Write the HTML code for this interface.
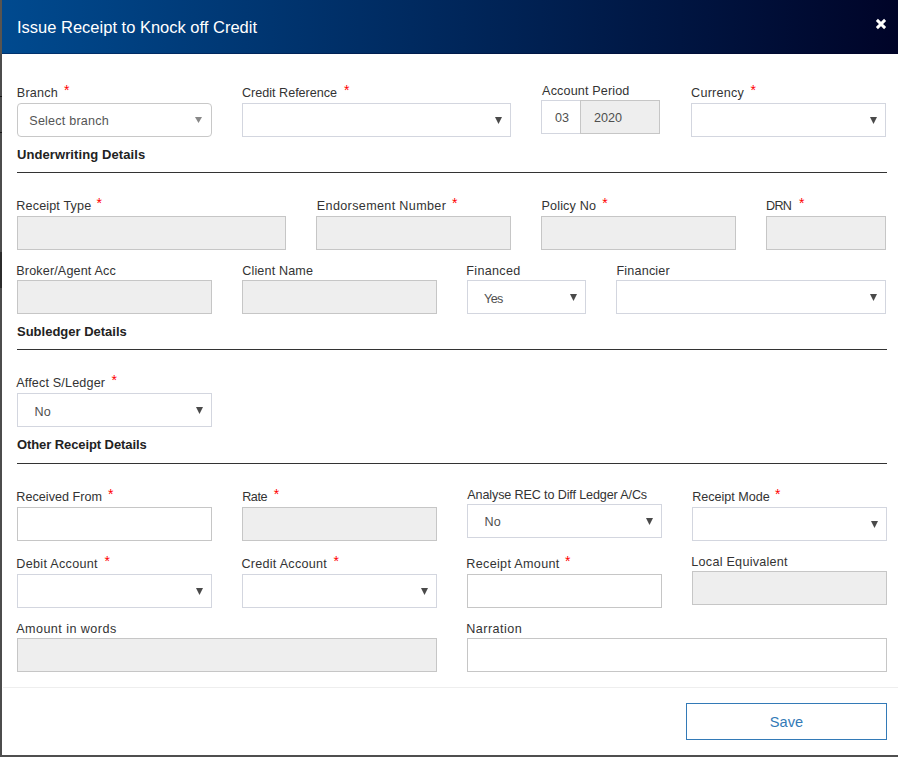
<!DOCTYPE html>
<html><head><meta charset="utf-8">
<style>
*{margin:0;padding:0;box-sizing:border-box}
html,body{width:898px;height:757px;overflow:hidden;background:#fff}
body{font-family:"Liberation Sans",sans-serif;position:relative;color:#333}
.lb{position:absolute;left:0;bottom:0;width:2px;top:0;background:#4c4c4c}
.bb{position:absolute;left:0;right:0;bottom:0;height:2px;background:#4f4f4f}
.hdr{position:absolute;left:2px;top:0;right:0;height:54px;background:linear-gradient(to right,#004a8f 0%,#000428 100%);border-bottom:1px solid rgba(0,0,40,.3)}
.title{position:absolute;left:15px;top:17px;color:#fff;font-size:16.5px;line-height:20px;white-space:nowrap}
.x{position:absolute;left:874px;top:19px;width:10px;height:10px;overflow:visible}
.l{position:absolute;font-size:12.6px;line-height:15px;white-space:nowrap;color:#333}
.ast{position:absolute;color:#f00;font-size:14px;line-height:15px}
.h{position:absolute;left:17px;font-size:13px;font-weight:bold;line-height:15px;color:#222;white-space:nowrap}
.ln{position:absolute;left:17px;width:870px;height:1px;background:#333}
.b{position:absolute;height:34px;border:1px solid #d3d6df;background:#fff}
.g{background:#eee;border-color:#c6c6c6}
.w{border-color:#c6c6c6}
.ar{position:absolute;width:7px;height:7px;background:#4a4a4a;clip-path:polygon(0 0,100% 0,50% 100%)}
.t{position:absolute;font-size:12.6px;line-height:15px;color:#4f4f4f;white-space:nowrap}
</style></head><body>
<div class="hdr"><div class="title">Issue Receipt to Knock off Credit</div>
<svg class="x" viewBox="0 0 10 10"><path d="M0.9 0.9 L9.1 9.1 M9.1 0.9 L0.9 9.1" stroke="#fff" stroke-width="2.9"/></svg>
</div>
<div class="lb"></div><div class="bb"></div>
<div style="position:absolute;left:0;top:0;width:2px;height:54px;background:#58544f"></div>
<div style="position:absolute;left:0;top:96px;width:2px;height:1px;background:#151515"></div>
<div style="position:absolute;left:0;top:132px;width:2px;height:1px;background:#151515"></div>
<div style="position:absolute;left:0;top:252px;width:2px;height:36px;background:#2b2b2b"></div>

<!-- row 1 -->
<div class="b" style="left:17px;top:103px;width:195px;border-radius:4px;border-color:#c8c8c8"></div>
<div class="t" style="left:29.3px;top:114px;color:#555;letter-spacing:0.2px">Select branch</div>
<div class="ar" style="left:195px;top:117px;background:#888;height:6px"></div>

<div class="b" style="left:242px;top:103px;width:269px"></div>
<div class="ar" style="left:495px;top:117px"></div>

<div class="b" style="left:541px;top:100px;width:40px"></div>
<div class="b g" style="left:580px;top:100px;width:80px"></div>
<div class="t" style="left:555px;top:111px">03</div>
<div class="t" style="left:594px;top:111px">2020</div>

<div class="b" style="left:691px;top:103px;width:195px"></div>
<div class="ar" style="left:870px;top:117px"></div>

<div class="h" style="top:147px;letter-spacing:0.09px">Underwriting Details</div>
<div class="ln" style="top:172px"></div>

<!-- row 2 -->
<div class="b g" style="left:17px;top:216px;width:269px"></div>
<div class="b g" style="left:316px;top:216px;width:195px"></div>
<div class="b g" style="left:541px;top:216px;width:195px"></div>
<div class="b g" style="left:766px;top:216px;width:120px"></div>

<!-- row 3 -->
<div class="b g" style="left:17px;top:280px;width:195px"></div>
<div class="b g" style="left:242px;top:280px;width:195px"></div>
<div class="b" style="left:467px;top:280px;width:119px"></div>
<div class="t" style="left:484px;top:292px;letter-spacing:-0.6px">Yes</div>
<div class="ar" style="left:570px;top:294px"></div>
<div class="b" style="left:616px;top:280px;width:270px"></div>
<div class="ar" style="left:870px;top:294px"></div>

<div class="h" style="top:324px">Subledger Details</div>
<div class="ln" style="top:349px"></div>

<!-- row 4 -->
<div class="b" style="left:17px;top:393px;width:195px"></div>
<div class="t" style="left:34.6px;top:405px">No</div>
<div class="ar" style="left:196px;top:407px"></div>

<div class="h" style="top:437px;letter-spacing:-0.09px">Other Receipt Details</div>
<div class="ln" style="top:463px"></div>

<!-- row 5 -->
<div class="b w" style="left:17px;top:507px;width:195px"></div>
<div class="b g" style="left:242px;top:507px;width:195px"></div>
<div class="b" style="left:467px;top:504px;width:195px"></div>
<div class="t" style="left:484.6px;top:515px">No</div>
<div class="ar" style="left:646px;top:518px"></div>
<div class="b" style="left:692px;top:507px;width:195px"></div>
<div class="ar" style="left:871px;top:521px"></div>

<!-- row 6 -->
<div class="b" style="left:17px;top:574px;width:195px"></div>
<div class="ar" style="left:196px;top:588px"></div>
<div class="b" style="left:242px;top:574px;width:195px"></div>
<div class="ar" style="left:421px;top:588px"></div>
<div class="b w" style="left:467px;top:574px;width:195px"></div>
<div class="b g" style="left:692px;top:571px;width:195px"></div>

<!-- row 7 -->
<div class="b g" style="left:17px;top:638px;width:420px"></div>
<div class="b w" style="left:467px;top:638px;width:420px"></div>

<div style="position:absolute;left:3px;right:0;top:687px;height:1px;background:#eee"></div>
<div style="position:absolute;left:686px;top:703px;width:201px;height:37px;border:1.5px solid #337ab7;color:#337ab7;font-size:14.6px;line-height:36px;text-align:center">Save</div>
<div class="l" id="L0" style="left:16.80px;top:86px;letter-spacing:0.220px">Branch</div>
<div class="ast" style="left:64.00px;top:83px">*</div>
<div class="l" id="L1" style="left:242.00px;top:86px;letter-spacing:-0.007px">Credit Reference</div>
<div class="ast" style="left:344.00px;top:83px">*</div>
<div class="l" id="L2" style="left:542.10px;top:84px;letter-spacing:0.138px">Account Period</div>
<div class="l" id="L3" style="left:691.10px;top:86px;letter-spacing:0.243px">Currency</div>
<div class="ast" style="left:750.40px;top:83px">*</div>
<div class="l" id="L4" style="left:16.30px;top:199px;letter-spacing:0.145px">Receipt Type</div>
<div class="ast" style="left:96.60px;top:196px">*</div>
<div class="l" id="L5" style="left:316.80px;top:199px;letter-spacing:0.347px">Endorsement Number</div>
<div class="ast" style="left:452.00px;top:196px">*</div>
<div class="l" id="L6" style="left:541.50px;top:199px;letter-spacing:0.150px">Policy No</div>
<div class="ast" style="left:602.30px;top:196px">*</div>
<div class="l" id="L7" style="left:766.00px;top:199px;letter-spacing:-0.700px">DRN</div>
<div class="ast" style="left:799.00px;top:196px">*</div>
<div class="l" id="L8" style="left:16.30px;top:264px;letter-spacing:0.140px">Broker/Agent Acc</div>
<div class="l" id="L9" style="left:242.20px;top:264px;letter-spacing:0.150px">Client Name</div>
<div class="l" id="L10" style="left:466.30px;top:264px;letter-spacing:0.314px">Financed</div>
<div class="l" id="L11" style="left:616.50px;top:264px;letter-spacing:0.175px">Financier</div>
<div class="l" id="L12" style="left:16.20px;top:376px;letter-spacing:0.164px">Affect S/Ledger</div>
<div class="ast" style="left:111.60px;top:373px">*</div>
<div class="l" id="L13" style="left:16.30px;top:490px;letter-spacing:0.033px">Received From</div>
<div class="ast" style="left:108.00px;top:487px">*</div>
<div class="l" id="L14" style="left:242.20px;top:490px;letter-spacing:-0.433px">Rate</div>
<div class="ast" style="left:273.70px;top:487px">*</div>
<div class="l" id="L15" style="left:467.30px;top:488px;letter-spacing:-0.133px">Analyse REC to Diff Ledger A/Cs</div>
<div class="l" id="L16" style="left:692.20px;top:490px;letter-spacing:-0.018px">Receipt Mode</div>
<div class="ast" style="left:775.00px;top:487px">*</div>
<div class="l" id="L17" style="left:16.30px;top:557px;letter-spacing:0.300px">Debit Account</div>
<div class="ast" style="left:104.40px;top:554px">*</div>
<div class="l" id="L18" style="left:241.40px;top:557px;letter-spacing:0.269px">Credit Account</div>
<div class="ast" style="left:333.50px;top:554px">*</div>
<div class="l" id="L19" style="left:466.30px;top:557px;letter-spacing:0.315px">Receipt Amount</div>
<div class="ast" style="left:565.00px;top:554px">*</div>
<div class="l" id="L20" style="left:691.30px;top:555px;letter-spacing:0.260px">Local Equivalent</div>
<div class="l" id="L21" style="left:16.20px;top:622px;letter-spacing:0.443px">Amount in words</div>
<div class="l" id="L22" style="left:466.30px;top:622px;letter-spacing:0.450px">Narration</div>
</body></html>
